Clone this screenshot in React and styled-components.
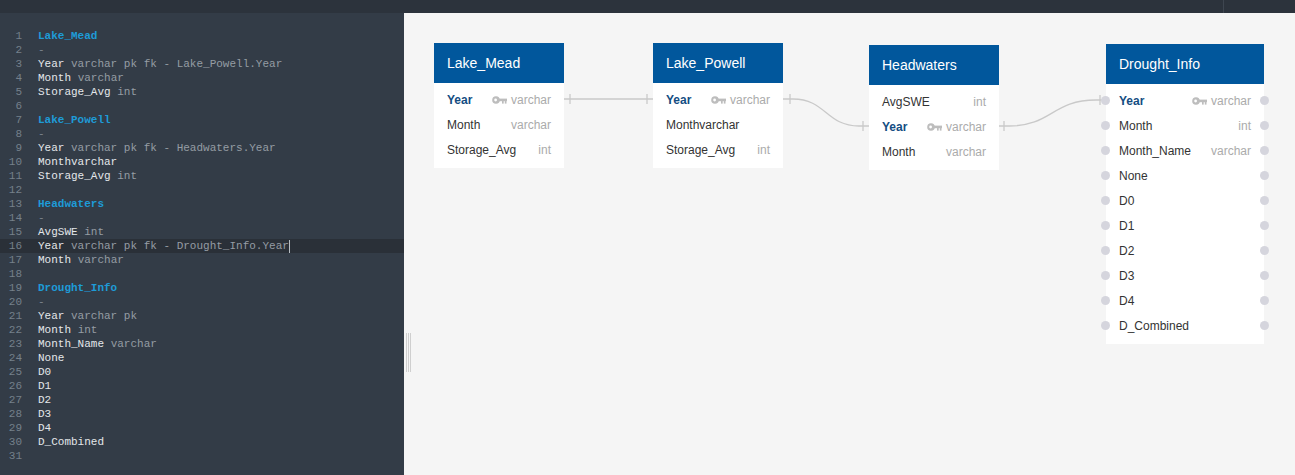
import React from "react";
import styled, { createGlobalStyle } from "styled-components";

const GlobalStyle = createGlobalStyle`
  *, *::before, *::after { box-sizing: border-box; }
  html, body { margin: 0; padding: 0; height: 100%; overflow: hidden; }
  body { font-family: "Liberation Sans", Arial, sans-serif; background: #f5f5f5; }
`;

const schema = [
  {
    name: "Lake_Mead",
    x: 30, y: 30, width: 130,
    fields: [
      { name: "Year", type: "varchar", key: true, src: "varchar pk fk - Lake_Powell.Year" },
      { name: "Month", type: "varchar", src: "varchar" },
      { name: "Storage_Avg", type: "int", src: "int" },
    ],
  },
  {
    name: "Lake_Powell",
    x: 249, y: 30, width: 130,
    fields: [
      { name: "Year", type: "varchar", key: true, src: "varchar pk fk - Headwaters.Year" },
      { name: "Monthvarchar" },
      { name: "Storage_Avg", type: "int", src: "int" },
    ],
  },
  {
    name: "Headwaters",
    x: 465, y: 32, width: 130,
    fields: [
      { name: "AvgSWE", type: "int", src: "int" },
      { name: "Year", type: "varchar", key: true, src: "varchar pk fk - Drought_Info.Year", active: true },
      { name: "Month", type: "varchar", src: "varchar" },
    ],
  },
  {
    name: "Drought_Info",
    x: 702, y: 31, width: 158, dots: true,
    fields: [
      { name: "Year", type: "varchar", key: true, src: "varchar pk" },
      { name: "Month", type: "int", src: "int" },
      { name: "Month_Name", type: "varchar", src: "varchar" },
      { name: "None" },
      { name: "D0" },
      { name: "D1" },
      { name: "D2" },
      { name: "D3" },
      { name: "D4" },
      { name: "D_Combined" },
    ],
  },
];

const buildLines = () => {
  const lines = [];
  schema.forEach((t) => {
    lines.push({ kind: "table", text: t.name });
    lines.push({ kind: "dash", text: "-" });
    t.fields.forEach((f) => lines.push({ kind: "field", field: f }));
    lines.push({ kind: "blank" });
  });
  return lines;
};

const Page = styled.div`
  height: 100vh;
  display: flex;
  flex-direction: column;
`;

const TopBar = styled.div`
  height: 13px;
  flex-shrink: 0;
  background: #2c333c;
  display: flex;
  justify-content: flex-end;
`;

const TopDivider = styled.div`
  width: 1px;
  background: #3e4650;
  margin-right: 71px;
`;

const Main = styled.div`
  flex: 1;
  display: flex;
  min-height: 0;
`;

const Editor = styled.div`
  width: 404px;
  flex-shrink: 0;
  background: #333c47;
  padding-top: 16px;
  font-family: "Liberation Mono", "DejaVu Sans Mono", monospace;
  font-size: 11px;
`;

const Line = styled.div`
  display: flex;
  height: 14px;
  line-height: 14px;
  white-space: pre;
  background: ${(p) => (p.$active ? "#2a3038" : "transparent")};
`;

const LineNo = styled.span`
  width: 22px;
  text-align: right;
  color: #75808b;
  flex-shrink: 0;
`;

const Code = styled.span`
  padding-left: 16px;
  display: flex;
  align-items: center;
`;

const TableName = styled.span`
  color: #1e9bd7;
  font-weight: bold;
`;

const Dash = styled.span`
  color: #7b848d;
`;

const FieldName = styled.span`
  color: #e4e7ea;
`;

const FieldType = styled.span`
  color: #959ca4;
`;

const Cursor = styled.span`
  width: 1px;
  height: 13px;
  background: #b8bec4;
`;

const Canvas = styled.div`
  flex: 1;
  position: relative;
  background: #f5f5f5;
`;

const Splitter = styled.div`
  position: absolute;
  left: 2px;
  top: 320px;
  width: 5px;
  height: 39px;
  border-left: 1px solid #cfcfcf;
  border-right: 1px solid #cfcfcf;
  &::after {
    content: "";
    position: absolute;
    left: 1px;
    top: 0;
    width: 1px;
    height: 100%;
    background: #cfcfcf;
  }
`;

const Wires = styled.svg`
  position: absolute;
  left: 0;
  top: 0;
  width: 100%;
  height: 100%;
  pointer-events: none;
`;

const Card = styled.div`
  position: absolute;
  left: ${(p) => p.$x}px;
  top: ${(p) => p.$y}px;
  width: ${(p) => p.$w}px;
  background: #fff;
`;

const CardHeader = styled.div`
  height: 40px;
  background: #01579c;
  color: #fff;
  font-size: 14px;
  display: flex;
  align-items: center;
  padding: 0 13px;
`;

const CardBody = styled.div`
  padding: 4px 0 6px;
`;

const Row = styled.div`
  position: relative;
  height: 25px;
  display: flex;
  align-items: center;
  padding: 0 13px;
  font-size: 12px;
`;

const ColName = styled.span`
  color: ${(p) => (p.$key ? "#144d82" : "#333")};
  font-weight: ${(p) => (p.$key ? "bold" : "normal")};
`;

const ColType = styled.span`
  margin-left: auto;
  display: flex;
  align-items: center;
  gap: 4px;
  color: #ababab;
`;

const Dot = styled.span`
  position: absolute;
  top: 50%;
  width: 9px;
  height: 9px;
  margin-top: -4.5px;
  border-radius: 50%;
  background: #d5d5dd;
  ${(p) => (p.$side === "left" ? "left: -5px;" : "right: -5px;")}
`;

const KeyIcon = () => (
  <svg width="15" height="8" viewBox="0 0 15 8">
    <circle cx="4" cy="4" r="3.8" fill="#bdbdbd" />
    <circle cx="3.6" cy="4" r="1.4" fill="#fff" />
    <rect x="7" y="2.6" width="8" height="2.6" fill="#bdbdbd" />
    <rect x="10" y="4" width="1.7" height="3.6" fill="#bdbdbd" />
    <rect x="12.8" y="4" width="1.7" height="3.6" fill="#bdbdbd" />
  </svg>
);

const Tick = ({ x, y }) => (
  <line x1={x} y1={y - 5} x2={x} y2={y + 5} stroke="#c9c9c9" strokeWidth="1.3" />
);

const Connectors = () => (
  <Wires>
    <g fill="none" stroke="#c9c9c9" strokeWidth="1.3">
      <path d="M160 86 H249" />
      <path d="M379 86 H389 C422 86, 422 113, 455 113 H465" />
      <path d="M595 113 H605 C648 113, 648 87, 692 87 H702" />
    </g>
    <Tick x={166} y={86} />
    <Tick x={243} y={86} />
    <Tick x={386} y={86} />
    <Tick x={459} y={113} />
    <Tick x={600} y={113} />
    <Tick x={696} y={87} />
  </Wires>
);

const TableCard = ({ table }) => (
  <Card $x={table.x} $y={table.y} $w={table.width}>
    <CardHeader>{table.name}</CardHeader>
    <CardBody>
      {table.fields.map((f) => (
        <Row key={f.name}>
          {table.dots && <Dot $side="left" />}
          <ColName $key={f.key}>{f.name}</ColName>
          {f.type && (
            <ColType>
              {f.key && <KeyIcon />}
              {f.type}
            </ColType>
          )}
          {table.dots && <Dot $side="right" />}
        </Row>
      ))}
    </CardBody>
  </Card>
);

const App = () => {
  const lines = buildLines();
  return (
    <Page>
      <GlobalStyle />
      <TopBar>
        <TopDivider />
      </TopBar>
      <Main>
        <Editor>
          {lines.map((l, i) => (
            <Line key={i} $active={l.kind === "field" && l.field.active}>
              <LineNo>{i + 1}</LineNo>
              <Code>
                {l.kind === "table" && <TableName>{l.text}</TableName>}
                {l.kind === "dash" && <Dash>{l.text}</Dash>}
                {l.kind === "field" && (
                  <>
                    <FieldName>{l.field.name}</FieldName>
                    {l.field.src && <FieldType> {l.field.src}</FieldType>}
                    {l.field.active && <Cursor />}
                  </>
                )}
              </Code>
            </Line>
          ))}
        </Editor>
        <Canvas>
          <Splitter />
          <Connectors />
          {schema.map((t) => (
            <TableCard key={t.name} table={t} />
          ))}
        </Canvas>
      </Main>
    </Page>
  );
};

export default App;
